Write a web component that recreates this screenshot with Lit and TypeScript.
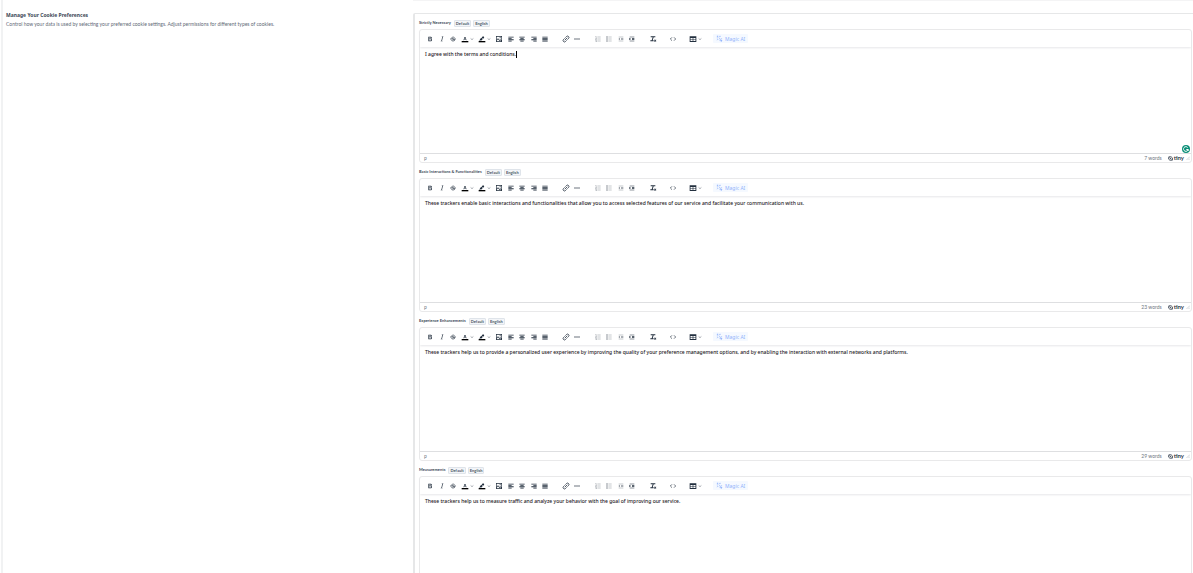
import { LitElement, html, css, svg } from "lit";
import { customElement, property } from "lit/decorators.js";

const icons: Record<string, unknown> = {
  bold: svg`<path d="M7.800 19c-.3 0-.5 0-.6-.2l-.2-.5V5.700c0-.2 0-.4.200-.5l.6-.2h5c1.500 0 2.700.3 3.500 1 .7.600 1.100 1.400 1.100 2.500a3 3 0 0 1-.6 1.900c-.4.600-1 1-1.600 1.200.4.100.9.300 1.300.600s.8.700 1 1.200c.4.400.5 1 .5 1.600 0 1.300-.4 2.300-1.300 3-.8.700-2.100 1-3.800 1H7.800Zm5-8.300c.6 0 1.200-.1 1.600-.5.4-.3.600-.7.600-1.300 0-1.100-.8-1.700-2.300-1.700H9.300v3.500h3.400Zm.5 6c.7 0 1.300-.1 1.700-.4.4-.4.600-.9.600-1.500s-.2-1-.7-1.400c-.4-.3-1-.4-2-.4H9.400v3.800h4Z"/>`,
  italic: svg`<path d="m16.700 4.700-.1.900h-.3c-.6 0-1 0-1.400.3-.3.300-.4.600-.5 1.100l-2.100 9.800v.6c0 .5.400.8 1.400.8h.2l-.2.800H8l.2-.8h.2c1.100 0 1.800-.5 2-1.500l2-9.800.1-.5c0-.6-.4-.8-1.400-.8h-.3l.2-.9h5.700Z"/>`,
  strike: svg`<path d="M15.600 8.500c-.5-.7-1-1.100-1.300-1.300-.6-.4-1.300-.6-2-.6-2.700 0-2.800 1.700-2.800 2.100 0 1.600 1.800 2 3.200 2.300 4.400.9 4.600 2.800 4.600 3.900 0 1.400-.7 4.100-5 4.100A6.200 6.200 0 0 1 7 16.400l1.500-1.100c.4.600 1.600 2 3.700 2 1.600 0 2.500-.4 3-1.200.4-.8.300-2-.8-2.600-.7-.4-1.600-.7-2.900-1-1-.2-3.900-.8-3.900-3.600C7.600 6 10.300 5 12.400 5c2.900 0 4.200 1.600 4.700 2.400l-1.500 1.100Z"/><path d="M3 11h18v2H3z"/>`,
  color: svg`<path fill="#000" d="M2 18h20v4H2z"/><path d="M8.700 16h-.8a.5.500 0 0 1-.5-.6l2.700-9c.1-.3.300-.4.500-.4h2.800c.2 0 .4.100.5.400l2.700 9a.5.500 0 0 1-.5.600h-.8a.5.500 0 0 1-.4-.4l-.7-2.200H9.800l-.7 2.200a.5.500 0 0 1-.4.400Zm2.600-7.600-.9 3.200h3.200l-.9-3.200h-1.400Z"/>`,
  marker: svg`<path fill="#000" d="M2 18h20v4H2z"/><path d="M7.700 16.700H3l3.300-3.300-.7-.8L10.200 8l4 4.100-4 4.200c-.2.200-.6.200-.8 0l-.6-.7-1.100 1.100Zm5-7.500L11 7.400l3-2.900a2 2 0 0 1 2.600 0L18 6c.7.700.7 2 0 2.700l-2.900 2.900-2.400-2.400Z"/>`,
  image: svg`<path fill-rule="evenodd" d="M3 3h18v18H3V3Zm2 2v9l4-4 5 5 2-2 3 3V5H5Zm9 2h3v3h-3V7ZM5 17v2h14l-3-3-2 2-5-5-4 4Z"/>`,
  left: svg`<path d="M4 5h16v2.500H4zM4 9h10v2.500H4zM4 13h16v2.500H4zM4 17h10v2.500H4z"/>`,
  center: svg`<path d="M4 5h16v2.500H4zM7 9h10v2.500H7zM4 13h16v2.500H4zM7 17h10v2.500H7z"/>`,
  right: svg`<path d="M4 5h16v2.500H4zM10 9h10v2.500H10zM4 13h16v2.500H4zM10 17h10v2.500H10z"/>`,
  justify: svg`<path d="M4 5h16v2.500H4zM4 9h16v2.500H4zM4 13h16v2.500H4zM4 17h16v2.500H4z"/>`,
  link: svg`<path fill="none" stroke="currentColor" stroke-width="2.400" stroke-linecap="round" d="m9 15 6-6M11 7l2.500-2.500a4 4 0 0 1 6 6L17 13M13 17l-2.500 2.500a4 4 0 0 1-6-6L7 11"/>`,
  line: svg`<path d="M3 11h18v2H3z"/>`,
  ol: svg`<path d="M10 5h10v2H10zM10 11h10v2H10zM10 17h10v2H10zM4 4h3v5H5.500V5.500H4zM4 10h4v2l-2 2h2v1H4v-1l2-3H4zM4 16h4v5H4v-1h2.500v-1H5v-1h1.500v-1H4z"/>`,
  ul: svg`<path d="M10 5h10v2H10zM10 11h10v2H10zM10 17h10v2H10zM4 4h4v4H4zM4 10h4v4H4zM4 16h4v4H4z"/>`,
  outdent: svg`<path d="M5 5h14v2H5zM12 9h7v2h-7zM12 13h7v2h-7zM5 17h14v2H5zM9 8v8l-5-4z"/>`,
  indent: svg`<path d="M5 5h14v2H5zM12 9h7v2h-7zM12 13h7v2h-7zM5 17h14v2H5zM4 8v8l5-4z"/>`,
  clear: svg`<path d="M5 4h14v3h-5l-3 9h3v3H4v-3h4l3-9H5zM15 15l1.500-1.500 2 2 2-2L22 15l-2 2 2 2-1.500 1.500-2-2-2 2L15 19l2-2z"/>`,
  code: svg`<path fill="none" stroke="currentColor" stroke-width="2" d="m9 7-5 5 5 5M15 7l5 5-5 5"/>`,
  table: svg`<path fill-rule="evenodd" d="M2 4h20v17H2V4Zm2.500 5v3.500H11V9H4.500Zm8.500 0v3.500h6.500V9H13Zm-8.500 5.500V18H11v-3.500H4.500Zm8.500 0V18h6.500v-3.500H13Z"/>`,
  chevron: svg`<path fill="none" stroke="currentColor" stroke-width="3" d="m4 9 8 7 8-7"/>`,
  magic: svg`<path fill="none" stroke="currentColor" stroke-width="2" d="m9 9 11 11M3 4h5M3 9h3M12 3v4M3 14h4M17 3l-4 4M4 18l4-4M16 12l5 1M13 16l1 5"/><path d="m18 15 1.500 3 3 1.500-3 1.500-1.500 3-1.500-3-3-1.500 3-1.500zM5 2l1 2 2 1-2 1-1 2-1-2-2-1 2-1z"/>`,
};

const icon = (name: string) =>
  html`<svg class="icon ${name}" viewBox="0 0 24 24" aria-hidden="true">${icons[name]}</svg>`;

interface Tool { icon: string; label: string; menu?: boolean; off?: boolean }

const groups: Tool[][] = [
  [
    { icon: "bold", label: "Bold" },
    { icon: "italic", label: "Italic" },
    { icon: "strike", label: "Strikethrough" },
  ],
  [
    { icon: "color", label: "Text color", menu: true },
    { icon: "marker", label: "Background color", menu: true },
  ],
  [{ icon: "image", label: "Insert image" }],
  [
    { icon: "left", label: "Align left" },
    { icon: "center", label: "Align center" },
    { icon: "right", label: "Align right" },
    { icon: "justify", label: "Justify" },
  ],
  [
    { icon: "link", label: "Insert link" },
    { icon: "line", label: "Horizontal line" },
  ],
  [
    { icon: "ol", label: "Numbered list", off: true },
    { icon: "ul", label: "Bullet list", off: true },
    { icon: "outdent", label: "Decrease indent", off: true },
    { icon: "indent", label: "Increase indent" },
  ],
  [{ icon: "clear", label: "Clear formatting" }],
  [{ icon: "code", label: "Source code" }],
  [{ icon: "table", label: "Table", menu: true }],
];

@customElement("rich-editor")
export class RichEditor extends LitElement {
  @property() heading = "";
  @property() text = "";
  @property({ type: Number }) words = 0;
  @property({ type: Boolean }) active = false;

  static styles = css`
    :host { display: block; }
    * { box-sizing: border-box; }
    button { border: 0; padding: 0; margin: 0; background: none; font: inherit; color: inherit; }
    .head { display: flex; align-items: center; height: 15px; padding-top: 3px; gap: 2px; }
    .label { font-size: 4px; line-height: 6px; font-weight: 700; color: #3c4858; white-space: nowrap; margin-right: 1px; }
    .tag {
      height: 7px; padding: 0 1px; border: 1px solid #dfe4ea; border-radius: 1px; background: #f3f5f8;
      font-size: 4px; line-height: 5px; font-weight: 700; color: #4a5565;
    }
    .box { border: 1px solid #e9e9ea; border-radius: 3px; background: #fff; }
    .bar {
      display: flex; align-items: center; height: 17px; padding-left: 4px;
      box-shadow: 0 1px 2px #e6e7e9; color: #222f3e;
    }
    .group { display: flex; }
    .g3 { width: 35px; }
    .g4 { width: 46px; margin-right: 9px; }
    .g2 { width: 23px; margin-right: 9px; }
    .menus { width: 34px; }
    .single { width: 12px; }
    .spaced { margin-right: 8px; }
    .wide { width: 17px; margin-right: 9px; }
    .tool { flex: 1; display: flex; align-items: center; justify-content: center; height: 12px; }
    .tool.menu { justify-content: space-between; padding: 0 2px; }
    .tool:disabled { opacity: 0.5; }
    .icon { width: 8px; height: 8px; fill: currentColor; display: block; flex: none; }
    .chevron { width: 4px; height: 4px; opacity: 0.8; }
    .magic-ai {
      display: flex; align-items: center; gap: 2px; height: 9px; padding: 0 3px;
      background: #f5f9ff; border-radius: 1px; color: #8fb2fb;
      font-family: "Noto Sans", sans-serif; font-size: 5px; line-height: 8px; white-space: nowrap;
    }
    .magic-ai .icon { width: 7px; height: 7px; }
    .area { position: relative; height: 106px; }
    textarea, .ghost {
      font-family: "Noto Sans", sans-serif; font-size: 5px; line-height: 8px; font-weight: 500;
    }
    textarea {
      display: block; width: 100%; height: 100%; border: 0; outline: 0; resize: none; padding: 3px 5px;
      background: transparent; color: #1c181c; overflow: hidden;
    }
    .ghost {
      position: absolute; top: 3px; left: 5px; display: flex; align-items: center;
      color: transparent; pointer-events: none;
    }
    .caret { width: 1px; height: 7px; background: #000; }
    .grammar { position: absolute; right: 1px; bottom: 0; width: 8px; height: 8px; }
    .foot {
      display: flex; align-items: center; height: 9px; border-top: 1px solid #dedfe1; padding: 0 1px 0 4px;
      font-size: 5px; line-height: 8px; color: #6f7782;
    }
    .count { margin-left: auto; }
    .brand { display: flex; align-items: center; gap: 1px; margin-left: 6px; color: #2c3848; font-size: 6px; font-weight: 700; }
    .brand svg { width: 5px; height: 5px; }
    .grip { width: 4px; height: 4px; margin-left: 2px; color: #a5abb2; }
  `;

  private groupClass(g: Tool[]) {
    if (g.length === 1) return g[0].menu ? "wide" : g[0].icon === "image" ? "single" : "single spaced";
    return g[0].menu ? "menus" : `g${g.length}`;
  }

  render() {
    return html`
      <div class="head">
        <label class="label" for="body">${this.heading}</label>
        <button class="tag">Default</button>
        <button class="tag">English</button>
      </div>
      <div class="box">
        <div class="bar" role="toolbar" aria-label="Formatting">
          ${groups.map((g) => html`<div class="group ${this.groupClass(g)}">
            ${g.map((t) => html`<button class="tool ${t.menu ? "menu" : ""}" aria-label=${t.label} ?disabled=${t.off}>
              ${icon(t.icon)}${t.menu ? icon("chevron") : ""}</button>`)}
          </div>`)}
          <button class="magic-ai">${icon("magic")}Magic AI</button>
        </div>
        <div class="area">
          <textarea id="body" spellcheck="false" .value=${this.text}></textarea>
          ${this.active
            ? html`<div class="ghost" aria-hidden="true">${this.text}<span class="caret"></span></div>
                <svg class="grammar" viewBox="0 0 24 24" aria-hidden="true">
                  <circle cx="12" cy="12" r="12" fill="#0b8f78" />
                  <path fill="none" stroke="#fff" stroke-width="3" d="M17 7.500a7 7 0 1 0 1.500 6H13M18.500 13.500V18" />
                </svg>`
            : ""}
        </div>
        ${this.words
          ? html`<div class="foot">
              <span>p</span>
              <span class="count">${this.words} words</span>
              <span class="brand">
                <svg viewBox="0 0 24 24" aria-hidden="true"><path fill="none" stroke="currentColor" stroke-width="4" d="M4 4h11l6 5v11H9l-6-5zM8 9l8 6" /></svg>tiny
              </span>
              <svg class="grip" viewBox="0 0 8 8" aria-hidden="true"><path fill="none" stroke="currentColor" d="M1 8 8 1M5 8l3-3" /></svg>
            </div>`
          : ""}
      </div>
    `;
  }
}

@customElement("app-root")
export class AppRoot extends LitElement {
  static styles = css`
    :host {
      display: block; height: 100vh; overflow: hidden; background: #fff;
      font-family: Lato, "Noto Sans", sans-serif;
    }
    * { box-sizing: border-box; }
    .page {
      display: grid; grid-template-columns: 410fr 780fr; margin-left: 1px; min-height: 100%;
      border-left: 2px solid #f1f2f3;
    }
    .intro { padding: 11px 3px; }
    h2 {
      margin: 0; font-family: "Noto Sans", sans-serif; font-size: 5px; line-height: 8px;
      font-weight: 700; color: #3c4756;
    }
    p { margin: 1px 0 0; font-size: 5px; line-height: 8px; color: #5f6a77; }
    .side { border-top: 1px solid #f4f4f5; padding-top: 12px; min-width: 0; }
    .panel {
      border: solid #e6e7e8; border-width: 1px 0 0 2px; border-top-left-radius: 2px; padding: 0 1px 0 4px;
    }
  `;

  render() {
    return html`
      <main class="page">
        <section class="intro">
          <h2>Manage Your Cookie Preferences</h2>
          <p>Control how your data is used by selecting your preferred cookie settings. Adjust permissions for different types of cookies.</p>
        </section>
        <section class="side">
          <div class="panel">
            <rich-editor heading="Strictly Necessary" text="I agree with the terms and conditions." words="7" active></rich-editor>
            <rich-editor heading="Basic Interactions &amp; Functionalities" words="23"
              text="These trackers enable basic interactions and functionalities that allow you to access selected features of our service and facilitate your communication with us."></rich-editor>
            <rich-editor heading="Experience Enhancements" words="29"
              text="These trackers help us to provide a personalized user experience by improving the quality of your preference management options, and by enabling the interaction with external networks and platforms."></rich-editor>
            <rich-editor heading="Measurements"
              text="These trackers help us to measure traffic and analyze your behavior with the goal of improving our service."></rich-editor>
          </div>
        </section>
      </main>
    `;
  }
}
